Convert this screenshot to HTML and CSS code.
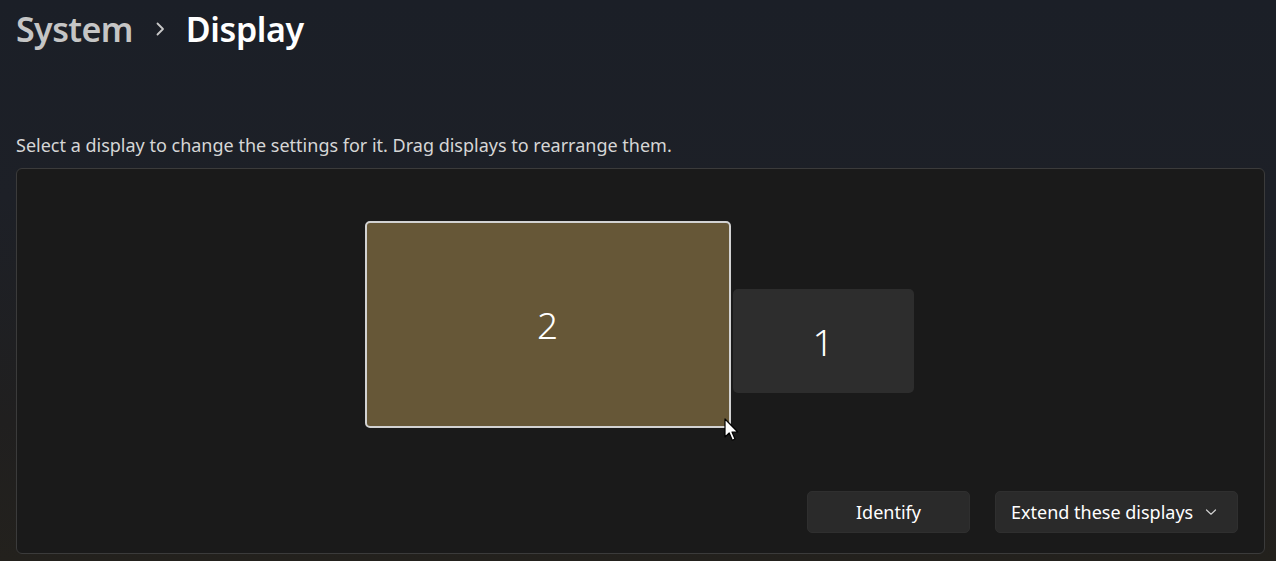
FILE: index.html
```html
<!DOCTYPE html>
<html lang="en">
<head>
<meta charset="utf-8">
<title>Display</title>
<link rel="stylesheet" href="styles.css">
</head>
<body>
<div class="page">
  <h1 class="breadcrumb">
    <span class="crumb-parent">System</span>
    <svg class="crumb-sep" width="12" height="16" viewBox="0 0 12 16"><path d="M3.5 2.5 L9 8 L3.5 13.5" fill="none" stroke="#c8c8c8" stroke-width="1.8" stroke-linecap="round" stroke-linejoin="round"/></svg>
    <span class="crumb-current">Display</span>
  </h1>
  <p class="hint">Select a display to change the settings for it. Drag displays to rearrange them.</p>
  <section class="panel">
    <div class="monitors">
      <div class="monitor monitor-selected"><span>2</span></div>
      <div class="monitor monitor-other"><span>1</span></div>
      <svg class="cursor" width="16" height="26" viewBox="0 0 16 26"><path d="M1 1 L1 19 L5.2 15 L8.3 22.2 L11 21 L8 14 L13.8 14 Z" fill="#fff" stroke="#000" stroke-width="1.2" stroke-linejoin="round"/></svg>
    </div>
    <div class="actions">
      <button class="btn btn-identify">Identify</button>
      <button class="btn btn-select">Extend these displays
        <svg class="chev" width="12" height="8" viewBox="0 0 12 8"><path d="M1.5 2 L6 6.2 L10.5 2" fill="none" stroke="#d0d0d0" stroke-width="1.2" stroke-linecap="round" stroke-linejoin="round"/></svg>
      </button>
    </div>
  </section>
</div>
</body>
</html>
```
FILE: styles.css
```css
html, body {
  margin: 0;
  padding: 0;
  height: 100%;
}
body {
  background: linear-gradient(180deg, #1b1f27 0%, #1d2027 35%, #201f1f 75%, #23211d 100%);
  font-family: "Noto Sans", "Open Sans", sans-serif;
  color: #ffffff;
  overflow: hidden;
}
.page {
  padding: 0 11px 0 16px;
}
.breadcrumb {
  margin: 0;
  padding-top: 3px;
  height: 52px;
  display: flex;
  align-items: center;
  font-size: 34px;
  font-weight: 600;
  letter-spacing: -0.6px;
  line-height: 52px;
}
.crumb-parent {
  color: #c5c5c5;
}
.crumb-sep {
  margin: 0 20px 0 21px;
}
.crumb-current {
  color: #ffffff;
  letter-spacing: -0.4px;
}
.hint {
  margin: 78px 0 0 0;
  font-size: 18px;
  line-height: 24px;
  color: #d6d6d6;
}
.panel {
  margin-top: 11px;
  box-sizing: border-box;
  height: 386px;
  background: #1a1a1a;
  border: 1px solid #3b3b3b;
  border-radius: 6px;
  display: flex;
  flex-direction: column;
}
.monitors {
  position: relative;
  display: flex;
  justify-content: center;
  align-items: flex-start;
  gap: 2px;
  padding-top: 52px;
  padding-right: 3px;
  height: 207px;
}
.monitor {
  box-sizing: border-box;
  display: flex;
  align-items: center;
  justify-content: center;
  border-radius: 5px;
  font-size: 37px;
  font-weight: 300;
  color: #ffffff;
}
.monitor-selected {
  width: 366px;
  height: 207px;
  background: #665737;
  border: 2px solid #d2d2d2;
}
.monitor-other {
  width: 181px;
  height: 104px;
  margin-top: 68px;
  background: #2d2d2d;
}
.cursor {
  position: absolute;
  left: 707px;
  top: 249px;
}
.actions {
  margin-top: auto;
  display: flex;
  justify-content: flex-end;
  gap: 25px;
  padding: 0 26px 20px 0;
}
.btn {
  font-family: inherit;
  font-size: 18px;
  color: #ffffff;
  background: #2a2a2a;
  border: 1px solid #2f2f2f;
  border-radius: 5px;
  height: 42px;
  cursor: default;
}
.btn-identify {
  width: 163px;
}
.btn-select {
  width: 243px;
  display: flex;
  align-items: center;
  justify-content: space-between;
  padding: 0 20px 0 15px;
  text-align: left;
}
.chev {
  display: block;
}
```
